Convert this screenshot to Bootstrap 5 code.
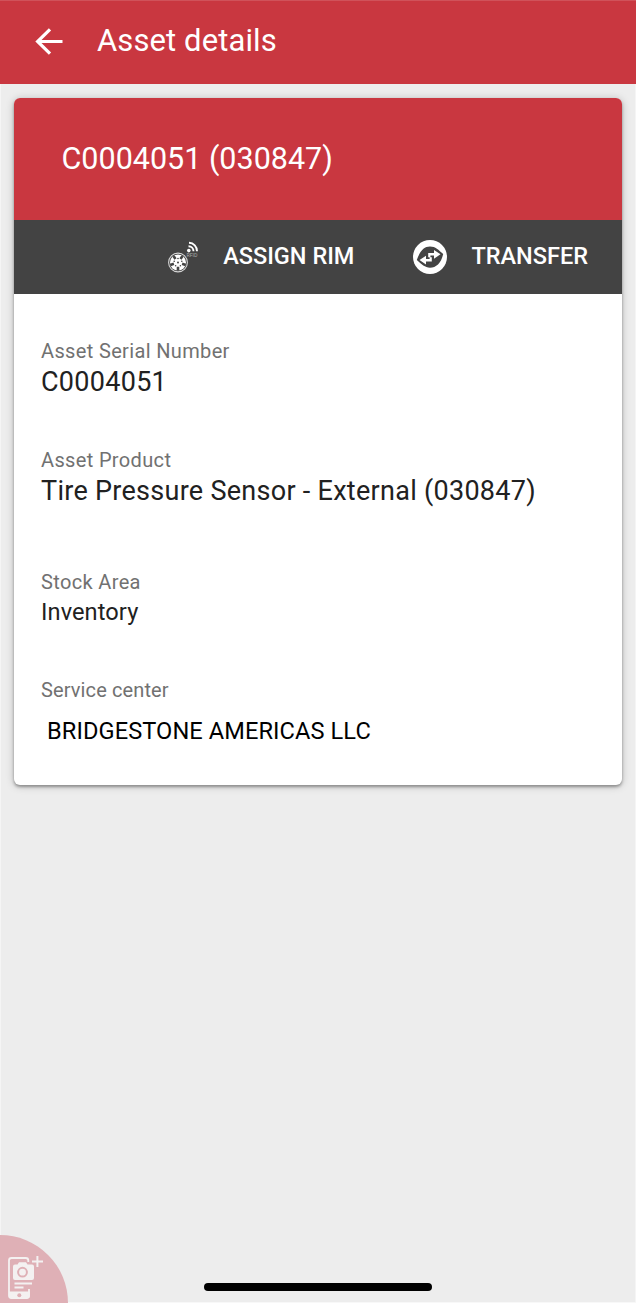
<!DOCTYPE html>
<html lang="en">
<head>
<meta charset="utf-8">
<meta name="viewport" content="width=device-width, initial-scale=1">
<title>Asset details</title>
<link href="https://cdn.jsdelivr.net/npm/bootstrap@5.3.0/dist/css/bootstrap.min.css" rel="stylesheet">
<style>
  body { font-family: Roboto, sans-serif; background: #ededed; color: #212121; }
  .screen { height: 1303px; box-shadow: inset 1px 0 #f5f5f5, inset 0 -1px #f8f8f8, inset -1px 0 #f5f5f5; }
  .bg-brand { background: #c93740; }
  .app-bar { height: 84px; padding: 0 35px 3px 34px; border-top: 1px solid #d0525a; }
  .app-title { font-size: 31px; letter-spacing: .1px; line-height: 40px; margin-left: 33px; }
  .asset-card { margin: 14px 14px 0; height: 687px; border-radius: 6px; box-shadow: 0 2px 3px rgba(0,0,0,.32), 0 1px 8px rgba(0,0,0,.22); }
  .asset-head { height: 122px; padding: 0 0 0 47.500px; font-size: 30.5px; }
  .actions { height: 74px; background: #434343; padding-right: 34px; font-size: 23.5px; font-weight: 500; }
  .caption { font-size: 20px; line-height: 24px; letter-spacing: .35px; color: #717171; }
  .fact { font-size: 27px; line-height: 36px; letter-spacing: .28px; position: relative; top: 1px; }
  .fact-sm { font-size: 23.6px; line-height: 36px; letter-spacing: .09px; }
  .details { padding: 45px 27px 0; }
  .home-bar { width: 228px; height: 8px; left: 204px; bottom: 12px; background: #000; }
</style>
</head>
<body>
<div class="screen position-relative overflow-hidden">
  <header class="app-bar bg-brand text-white d-flex align-items-center">
    <svg width="30" height="28" viewBox="0 0 30 28" fill="none" stroke="#fff" stroke-width="3.2"><path d="M28.5 14.500H4M16 2.300 3.600 14.500 16 26.700"/></svg>
    <h1 class="app-title fw-normal mb-0">Asset details</h1>
  </header>
  <main class="asset-card card border-0 overflow-hidden">
    <div class="asset-head bg-brand text-white d-flex align-items-center">C0004051 (030847)</div>
    <div class="actions text-white d-flex align-items-center justify-content-end">
      <svg class="flex-shrink-0" width="32" height="34" viewBox="0 0 32 34">
        <circle cx="11" cy="22.500" r="9.400" fill="none" stroke="#d5d5d5" stroke-width="1.100"/>
        <circle cx="11" cy="22.500" r="8" fill="#fff"/>
        <g fill="#434343"><circle cx="11" cy="22.500" r="1"/><circle cx="11" cy="18.500" r=".8"/><circle cx="14.800" cy="21.300" r=".8"/><circle cx="13.400" cy="25.700" r=".8"/><circle cx="8.600" cy="25.700" r=".8"/><circle cx="7.200" cy="21.300" r=".8"/></g>
        <g stroke="#434343" stroke-width="2.600"><path d="m13.500 19 2-3M15.100 23.800l3.600 1.200M11 26.800v4M6.900 23.800 3.300 25M8.500 19l-2-3"/></g>
        <circle cx="21.800" cy="10.600" r="1.800" fill="#fff"/>
        <path d="M21.500 6.300a5 5 0 0 1 5 5M22 2.800a8.200 8.200 0 0 1 8 8.500" fill="none" stroke="#fff" stroke-width="1.900"/>
        <text x="19.500" y="17.300" font-size="5" textLength="11" lengthAdjust="spacingAndGlyphs" fill="#aaa" font-weight="400">RFID</text>
      </svg>
      <span style="margin-left:24px">ASSIGN RIM</span>
      <svg class="flex-shrink-0" style="margin-left:59px" width="34" height="34" viewBox="0 0 34 34">
        <circle cx="17" cy="17" r="17" fill="#fff"/>
        <path d="M3.800 20C7 11 11 6.500 17 6.500c5.500 0 8.500 3.500 13.200 7.500C28 23.500 23 27.700 17 27.700c-5 0-8.500-3.500-13.200-7.700z" fill="#434343"/>
        <path d="M15.200 12.900h5.800v-3l6.500 4.400-6.500 4.400v-3.200h-3.600v1.700h-2.200zM18.800 21.500H13v3l-6.500-4.400 6.500-4.400v3.200h3.600v-1.700h2.200z" fill="#fff"/>
      </svg>
      <span style="margin-left:24px">TRANSFER</span>
    </div>
    <dl class="details mb-0">
      <dt class="caption fw-normal">Asset Serial Number</dt>
      <dd class="fact">C0004051</dd>
      <dt class="caption fw-normal" style="margin-top:49px">Asset Product</dt>
      <dd class="fact">Tire Pressure Sensor - External (030847)</dd>
      <dt class="caption fw-normal" style="margin-top:62px">Stock Area</dt>
      <dd class="fact-sm">Inventory</dd>
      <dt class="caption fw-normal" style="margin-top:48px;letter-spacing:.12px">Service center</dt>
      <dd class="fact-sm text-black" style="margin:11px 0 0 6px">BRIDGESTONE AMERICAS LLC</dd>
    </dl>
  </main>
  <svg class="position-absolute start-0 bottom-0" width="70" height="68" viewBox="0 0 70 68">
    <circle cx="0" cy="68" r="68" fill="#dfb0b6"/>
    <path d="M28.300 27V25.500q0-2.500-2.500-2.500H11.500Q9 23 9 25.500v35Q9 63 11.500 63h15q2.500 0 2.500-2.500V54" fill="none" stroke="#f4f1f1" stroke-width="1.800"/>
    <path d="M9 56.500h20.800v4.500q0 2.500-2.500 2.500h-16Q9 63.500 9 61z" fill="#f4f1f1"/>
    <circle cx="19.300" cy="60.300" r="2" fill="#dfb0b6"/>
    <path d="M15 29.500h2.500l1.500-2.300h7l1.500 2.300h4.500q2 0 2 2v11.500q0 2-2 2H15q-2 0-2-2V31.500q0-2 2-2z" fill="#f4f1f1"/>
    <circle cx="22.500" cy="37.200" r="4.400" fill="none" stroke="#dfb0b6" stroke-width="2"/>
    <path d="M14.500 48.500H32M14.500 52.600h9M37.400 21v11M32 26.500h11" stroke="#f4f1f1" stroke-width="2"/>
  </svg>
  <div class="home-bar position-absolute rounded-pill"></div>
</div>
<script src="https://cdn.jsdelivr.net/npm/bootstrap@5.3.0/dist/js/bootstrap.bundle.min.js"></script>
</body>
</html>
